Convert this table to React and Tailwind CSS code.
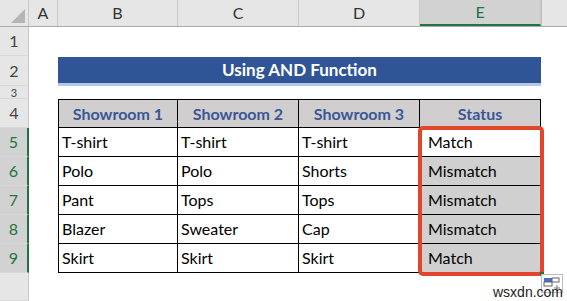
const COLS = [
  { key: 'A', w: 'w-[29px]' },
  { key: 'B', w: 'w-[120px]' },
  { key: 'C', w: 'w-[121px]' },
  { key: 'D', w: 'w-[121px]' },
  { key: 'E', w: 'w-[121px]' },
]

const ROWS = [
  ['T-shirt', 'T-shirt', 'T-shirt', 'Match'],
  ['Polo', 'Polo', 'Shorts', 'Mismatch'],
  ['Pant', 'Tops', 'Tops', 'Mismatch'],
  ['Blazer', 'Sweater', 'Cap', 'Mismatch'],
  ['Skirt', 'Skirt', 'Skirt', 'Match'],
]

const HEADERS = ['Showroom 1', 'Showroom 2', 'Showroom 3', 'Status']

// ─── Row number cell ─────────────────────────────────────────────────────────

function RowHead({ n, h, selected, small }) {
  return (
    <div
      className={`w-[29px] ${h} shrink-0 flex items-center justify-center overflow-hidden ${
        small ? 'text-[11px] leading-none' : 'text-[16px]'
      } border-b border-[#d8d8d8] ${
        selected
          ? 'bg-[#d2d2d2] text-[#217346] border-r-2 border-r-[#217346]'
          : 'bg-[#e6e6e6] text-[#444] border-r border-r-[#c8c8c8]'
      }`}
    >
      {n}
    </div>
  )
}

export default function App() {
  return (
    <div
      className="relative w-[567px] h-[301px] bg-white overflow-hidden"
      style={{ fontFamily: 'Lato, "Open Sans", sans-serif' }}
    >
      {/* Column headers */}
      <div className="flex h-[27px] bg-[#e6e6e6] border-b border-[#ababab]">
        <div className="w-[29px] shrink-0 relative border-r border-[#c8c8c8]">
          <svg className="absolute right-[3px] bottom-[3px]" width="14" height="14" viewBox="0 0 14 14">
            <polygon points="14,0 14,14 0,14" fill="#b5b5b5" />
          </svg>
        </div>
        {COLS.map((c) => (
          <div
            key={c.key}
            className={`${c.w} shrink-0 flex items-center justify-center text-[16px] border-r border-[#c8c8c8] ${
              c.key === 'E' ? 'bg-[#d2d2d2] text-[#217346] border-b-2 border-b-[#217346]' : 'text-[#333]'
            }`}
          >
            {c.key}
          </div>
        ))}
        <div className="flex-1 border-l border-[#bdbdbd]" />
      </div>

      {/* Row 1 */}
      <div className="flex h-[29px]">
        <RowHead n="1" h="h-[29px]" />
      </div>

      {/* Row 2: title */}
      <div className="flex h-[30px]">
        <RowHead n="2" h="h-[30px]" />
        <div className="w-[29px] shrink-0" />
        <div className="w-[483px] h-[29px] mt-px bg-[#2f5597] border-b-[3px] border-[#b4c7e7] flex items-center justify-center text-white font-bold text-[17px]">
          Using AND Function
        </div>
      </div>

      {/* Row 3 */}
      <div className="flex h-[13px]">
        <RowHead n="3" h="h-[13px]" small />
      </div>

      {/* Row 4: table header */}
      <div className="flex h-[29px]">
        <RowHead n="4" h="h-[29px]" />
        <div className="w-[29px] shrink-0" />
        {HEADERS.map((t, i) => (
          <div
            key={t}
            className={`${COLS[i + 1].w} shrink-0 h-[29px] bg-[#d0cece] border-t border-r border-b border-black ${
              i === 0 ? 'border-l' : ''
            } flex items-center justify-center font-bold text-[16px] text-[#3b5796]`}
          >
            {t}
          </div>
        ))}
      </div>

      {/* Rows 5-9 */}
      {ROWS.map((r, ri) => (
        <div key={ri} className="flex h-[29px]">
          <RowHead n={ri + 5} h="h-[29px]" selected />
          <div className="w-[29px] shrink-0" />
          {r.map((v, ci) => (
            <div
              key={ci}
              className={`${COLS[ci + 1].w} shrink-0 h-[29px] border-r border-b border-black ${
                ci === 0 ? 'border-l' : ''
              } ${ci === 3 ? 'pl-[8px]' : 'pl-[3px]'} ${
                ci === 3 && ri > 0 ? 'bg-[#d0d0d0]' : ''
              } flex items-center text-[16px] text-black`}
            >
              {v}
            </div>
          ))}
        </div>
      ))}

      {/* Below */}
      <div className="flex h-[28px]">
        <RowHead n="" h="h-[28px]" />
      </div>

      {/* Highlight around Status values */}
      <div className="absolute left-[418px] top-[126px] w-[126px] h-[150px] border-4 border-[#e2452b] rounded-[5px]" />
      <div className="absolute left-[540px] top-[272px] w-[4px] h-[4px] bg-[#217346]" />

      {/* Quick analysis button */}
      <div className="absolute left-[541px] top-[274px] w-[22px] h-[19px] bg-white border border-[#bdbdbd]">
        <svg width="20" height="17" viewBox="0 0 20 17">
          <rect x="2" y="3" width="8" height="4" fill="#4472c4" />
          <rect x="10" y="3" width="7" height="4" fill="none" stroke="#666" strokeWidth="1" />
          <rect x="2" y="7" width="8" height="4" fill="none" stroke="#666" strokeWidth="1" />
          <path d="M15 10v6M12 13h6" stroke="#777" strokeWidth="1" />
        </svg>
      </div>

      <div
        className="absolute left-[493px] top-[282px] text-[14px] text-[#222]"
        style={{ fontFamily: '"Liberation Sans", sans-serif' }}
      >
        wsxdn.com
      </div>
    </div>
  )
}
